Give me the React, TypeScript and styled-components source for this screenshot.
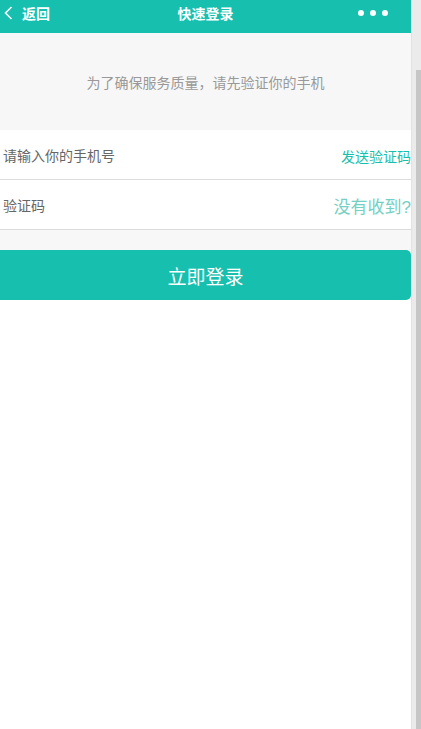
import styled, { createGlobalStyle } from 'styled-components';

const GlobalStyle = createGlobalStyle`
  html, body, #root {
    margin: 0;
    height: 100%;
  }
  body {
    font-family: "Liberation Sans", "Noto Sans CJK SC", sans-serif;
    background: #ffffff;
  }
`;

const teal = '#16bfae';

const Page = styled.div`
  display: flex;
  height: 100%;
  width: 421px;
`;

const Main = styled.div`
  display: flex;
  flex-direction: column;
  width: 411px;
  background: #ffffff;
`;

const Scrollbar = styled.div`
  width: 10px;
  display: flex;
  background: #ebebeb;
  border-left: 1px solid #e2e2e2;
  box-sizing: border-box;
  > .thumb {
    margin: 70px 0 0 auto;
    width: 5px;
    background: #c6c6c6;
  }
`;

const Header = styled.header`
  display: grid;
  grid-template-columns: 1fr auto 1fr;
  align-items: center;
  height: 33px;
  padding-bottom: 7px;
  box-sizing: border-box;
  background: ${teal};
  color: #ffffff;
  font-size: 14px;
  font-weight: bold;
  > .back {
    display: flex;
    align-items: center;
    gap: 9px;
    padding-left: 4px;
  }
  > .more {
    display: flex;
    justify-content: flex-end;
    gap: 6px;
    padding-right: 23px;
    > span {
      width: 6px;
      height: 6px;
      border-radius: 50%;
      background: #ffffff;
    }
  }
`;

const Notice = styled.div`
  display: flex;
  align-items: center;
  justify-content: center;
  height: 97px;
  background: #f7f7f7;
  color: #999999;
  font-size: 14px;
  box-sizing: border-box;
`;

const Row = styled.div`
  display: flex;
  align-items: center;
  justify-content: space-between;
  height: 50px;
  padding-left: 3px;
  box-sizing: border-box;
  border-bottom: 1px solid #dcdcdc;
  font-size: 14px;
  color: #666666;
`;

const Action = styled.span<{ $big?: boolean }>`
  color: ${(p) => (p.$big ? '#74cfc4' : teal)};
  font-size: ${(p) => (p.$big ? '17px' : '14px')};
  padding-top: 2px;
`;

const Gap = styled.div`
  height: 20px;
  background: #f7f7f7;
`;

const LoginButton = styled.button`
  height: 50px;
  width: 411px;
  border: none;
  border-radius: 0 5px 5px 0;
  background: ${teal};
  color: #ffffff;
  font-family: "Noto Sans CJK SC", sans-serif;
  font-size: 19px;
  padding: 0;
`;

const App = () => {
  return (
    <Page>
      <GlobalStyle />
      <Main>
        <Header>
          <div className='back'>
            <svg width='9' height='14' viewBox='0 0 9 14'>
              <path d='M7.5 1 L1.5 7 L7.5 13' fill='none' stroke='#fff' strokeWidth='1.6' />
            </svg>
            <span>返回</span>
          </div>
          <span>快速登录</span>
          <div className='more'>
            <span />
            <span />
            <span />
          </div>
        </Header>
        <Notice>为了确保服务质量，请先验证你的手机</Notice>
        <Row>
          <span>请输入你的手机号</span>
          <Action>发送验证码</Action>
        </Row>
        <Row>
          <span>验证码</span>
          <Action $big>没有收到?</Action>
        </Row>
        <Gap />
        <LoginButton>立即登录</LoginButton>
      </Main>
      <Scrollbar>
        <div className='thumb' />
      </Scrollbar>
    </Page>
  );
};

export default App;
